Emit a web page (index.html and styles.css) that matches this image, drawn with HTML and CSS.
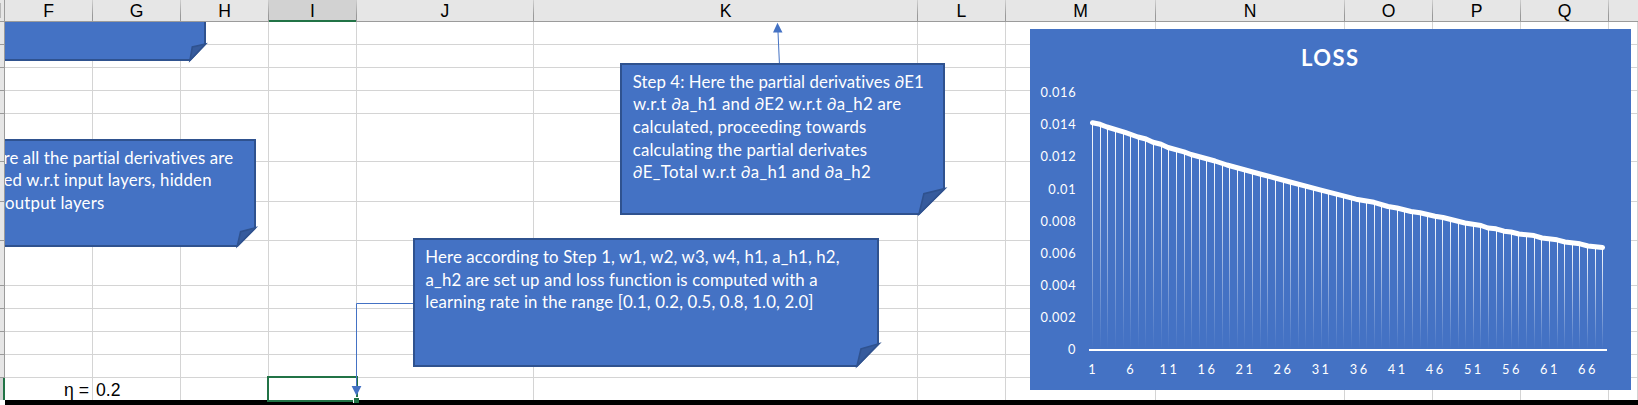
FILE: index.html
```
<!DOCTYPE html>
<html lang="en">
<head>
<meta charset="utf-8">
<title>Backpropagation worksheet</title>
<link rel="stylesheet" href="styles.css">
</head>
<body>
<main class="sheet">
  <header class="col-heads">
    <div class="corner"></div>
    <div class="head">F</div><div class="head">G</div><div class="head">H</div>
    <div class="head selected">I</div><div class="head">J</div><div class="head">K</div>
    <div class="head">L</div><div class="head">M</div><div class="head">N</div>
    <div class="head">O</div><div class="head">P</div><div class="head">Q</div>
    <div class="head last"></div>
  </header>
  <div class="cells" id="cells"></div>
  <div class="band"></div>

  <div class="selection"><i class="handle"></i></div>

  <svg class="objects" width="1633" height="383" viewBox="5 22 1633 383">
    <defs>
      <linearGradient id="drop" x1="0" y1="0" x2="0" y2="1">
        <stop offset="0" stop-color="#fff"/>
        <stop offset="1" stop-color="#fff" stop-opacity="0"/>
      </linearGradient>
    </defs>

    <g class="note">
      <path class="face" d="M-20 0H205V44L190 60H-20Z"/>
      <path class="fold" d="M205.5 44L192.3 47L190 60.3Z"/>
    </g>

    <g class="note">
      <path class="face" d="M-20 140H255V228L237.3 246H-20Z"/>
      <path class="fold" d="M255.5 227.8L240.6 231.6L237.3 246Z"/>
      <text x="3.5" y="163.6" textLength="229.5">re all the partial derivatives are</text>
      <text x="3.5" y="186.4" textLength="208">ed w.r.t input layers, hidden</text>
      <text x="5.0" y="208.8" textLength="99.2">output layers</text>
    </g>

    <g class="note">
      <path class="face" d="M621 64H944V189L919 214H621Z"/>
      <path class="fold" d="M944.8 188.6L923.9 193.6L919 214Z"/>
      <text x="632.7" y="87.6" textLength="291">Step 4: Here the partial derivatives ∂E1</text>
      <text x="633" y="110.4" textLength="268">w.r.t ∂a_h1 and ∂E2 w.r.t ∂a_h2 are</text>
      <text x="632.7" y="132.6" textLength="233.6">calculated, proceeding towards</text>
      <text x="632.7" y="155.6" textLength="234.3">calculating the partial derivates</text>
      <text x="632.7" y="177.6" textLength="238">∂E_Total w.r.t ∂a_h1 and ∂a_h2</text>
    </g>

    <g class="note">
      <path class="face" d="M414 239H878V344L857 366H414Z"/>
      <path class="fold" d="M879 343.8L861 348.8L857 366Z"/>
      <text x="425.3" y="262.7" textLength="414.2">Here according to Step 1, w1, w2, w3, w4, h1, a_h1, h2,</text>
      <text x="425.6" y="285.6" textLength="392">a_h2 are set up and loss function is computed with a</text>
      <text x="425.3" y="307.7" textLength="388.2">learning rate in the range [0.1, 0.2, 0.5, 0.8, 1.0, 2.0]</text>
    </g>

    <g class="connector">
      <path d="M779.4 63L778 32"/>
      <path class="tip" d="M777.5 22.8L782.5 32.6H773Z"/>
      <path d="M413 303.5H356.5V387"/>
      <path class="tip" d="M351.6 386H361.4L356.5 395.8Z"/>
    </g>

    <g class="chart">
      <rect class="plate" x="1030" y="29" width="601" height="361"/>
      <text class="title" x="1301" y="65.8" textLength="57">LOSS</text>
      <g id="yaxis"></g>
      <g id="xaxis"></g>
      <g id="drops"></g>
      <rect class="axis" x="1089" y="349" width="518" height="2"/>
      <polyline id="series"/>
    </g>
  </svg>
</main>
<script src="app.js"></script>
</body>
</html>
```

FILE: styles.css
```
body {
  margin: 0;
  background: #fff;
  overflow: hidden;
}

.sheet {
  position: relative;
  width: 1638px;
  height: 405px;
  overflow: hidden;
  font: 17.6px/22px "Liberation Sans", Arial, sans-serif;
  color: #000;
}

.col-heads,
.cells {
  display: grid;
  grid-template-columns: 5px 88px 88px 88px 88px 177px 384px 88px 150px 189px 88px 88px 88px 29px;
}

.col-heads {
  grid-template-rows: 22px;
  background: #e6e6e6;
}

.corner {
  box-sizing: border-box;
  border-right: 1px solid #9b9b9b;
  border-bottom: 1px solid #9b9b9b;
  background: linear-gradient(#b8b8b8, #b8b8b8) 0 3px / 1px 15px no-repeat;
}

.head {
  box-sizing: border-box;
  height: 22px;
  line-height: 23px;
  text-align: center;
  border-right: 1px solid;
  border-image: linear-gradient(#cfcfcf, #999 70%) 0 1 0 0;
  box-shadow: inset 0 -1px #9b9b9b;
}

.head.selected {
  background: #d2d2d2;
  box-shadow: inset 0 -2px #217346;
}

.head.last {
  border-right: 0;
}

.cells {
  grid-template-rows: 23px 23px 23px 23px 48px 40px 39px 45px 23px 23px 23px 23px 22px;
}

.cell {
  box-sizing: border-box;
  border-right: 1px solid #d4d4d4;
  border-bottom: 1px solid #d4d4d4;
  line-height: 25px;
  padding: 0 3px;
}

.cell.bottom {
  height: 22px;
  border-bottom: 0;
}

.cell.row-head {
  padding: 0;
  background: #e6e6e6;
  border-color: #9b9b9b;
}

.cell.row-head.selected {
  background: #d2d2d2;
  border-right: 2px solid #217346;
}

.cell.right {
  text-align: right;
}

.band {
  height: 5px;
  margin-left: 5px;
  background: #000;
}

.selection {
  position: absolute;
  left: 267px;
  top: 376px;
  box-sizing: border-box;
  width: 91px;
  height: 26px;
  border: 2px solid #217346;
}

.handle {
  position: absolute;
  right: -3px;
  bottom: -3px;
  width: 5px;
  height: 5px;
  background: #217346;
  border: solid #fff;
  border-width: 1px 0 0 1px;
}

.objects {
  position: absolute;
  left: 5px;
  top: 22px;
}

.note .face {
  fill: #4472c4;
  stroke: #2f528f;
  stroke-width: 2;
}

.note .fold {
  fill: #365b9d;
  stroke: #2f528f;
  stroke-width: 1.6;
}

.note text {
  font: 16.8px Lato, sans-serif;
  font-variant-ligatures: none;
  fill: #fff;
}

.connector path {
  fill: none;
  stroke: #4472c4;
  stroke-width: 1;
}

.connector .tip {
  fill: #4472c4;
  stroke: none;
}

.chart .plate {
  fill: #4472c4;
}

.chart .axis {
  fill: #fff;
}

.chart text {
  font: 12.8px Lato, sans-serif;
  fill: #fff;
}

.chart text.title {
  font-size: 22px;
  font-weight: 700;
}

#series {
  fill: none;
  stroke: #fff;
  stroke-width: 5;
  stroke-linecap: round;
  stroke-linejoin: round;
}
```

FILE: app.js
```
const SVG = "http://www.w3.org/2000/svg";

function add(parent, tag, attrs, text) {
  const el = document.createElementNS(SVG, tag);
  for (const key in attrs) el.setAttribute(key, attrs[key]);
  if (text !== undefined) el.textContent = text;
  parent.appendChild(el);
}

// Worksheet cells: 13 visible rows, a row header followed by 13 columns.
const cells = document.getElementById("cells");
for (let r = 0; r < 13; r++) {
  for (let c = 0; c < 14; c++) {
    const cell = document.createElement("div");
    cell.className = "cell";
    if (c === 0) cell.classList.add("row-head");
    if (r === 12) {
      cell.classList.add("bottom");
      if (c === 0) cell.classList.add("selected");
      if (c === 1) { cell.classList.add("right"); cell.textContent = "η ="; }
      if (c === 2) cell.textContent = "0.2";
    }
    cells.appendChild(cell);
  }
}

// Loss curve vertices.
const curve = [
  [1092.5, 122.7], [1100, 124.3], [1107, 127], [1125, 132.3], [1138, 137], [1146, 139],
  [1153, 142.3], [1161, 144.3], [1168, 147.5], [1184, 151.8], [1191, 154.5],
  [1215, 161], [1227, 165], [1260, 174], [1290, 182], [1320, 189.8], [1356, 199.2],
  [1374, 202.3], [1388, 206.5], [1397, 208], [1411, 211.5], [1420, 212.8],
  [1435, 216.2], [1443, 217.5], [1465, 223], [1481, 225.5], [1488, 228], [1496, 228.8],
  [1504, 231.2], [1511, 232], [1519, 234], [1534, 235.6], [1542, 238], [1557, 239.8],
  [1565, 242], [1580, 243.8], [1588, 246], [1602.5, 247.4]
];
document.getElementById("series").setAttribute("points", curve.join(" "));

function curveY(x) {
  for (let i = 1; i < curve.length; i++) {
    const [x0, y0] = curve[i - 1];
    const [x1, y1] = curve[i];
    if (x <= x1) return y0 + (y1 - y0) * (x - x0) / (x1 - x0);
  }
  return curve[curve.length - 1][1];
}

const drops = document.getElementById("drops");
for (let i = 0; i < 68; i++) {
  const x = Math.round(1092.2 + i * 7.612);
  const y = curveY(x + 0.5);
  add(drops, "rect", { x, y, width: 1, height: 349 - y, fill: "url(#drop)" });
}

const yaxis = document.getElementById("yaxis");
["0.016", "0.014", "0.012", "0.01", "0.008", "0.006", "0.004", "0.002", "0"].forEach((label, i) => {
  const width = { 5: 35.2, 4: 27.3, 1: 7.6 }[label.length];
  add(yaxis, "text", { x: 1075.6 - width, y: 97.2 + i * 32.1, textLength: width }, label);
});

const xaxis = document.getElementById("xaxis");
for (let n = 1; n <= 66; n += 5) {
  const cx = 1092 + (n - 1) * 7.612;
  const width = n < 10 ? 7.6 : 17.4;
  add(xaxis, "text", { x: cx - width / 2, y: 374.4, textLength: width }, String(n));
}
```
